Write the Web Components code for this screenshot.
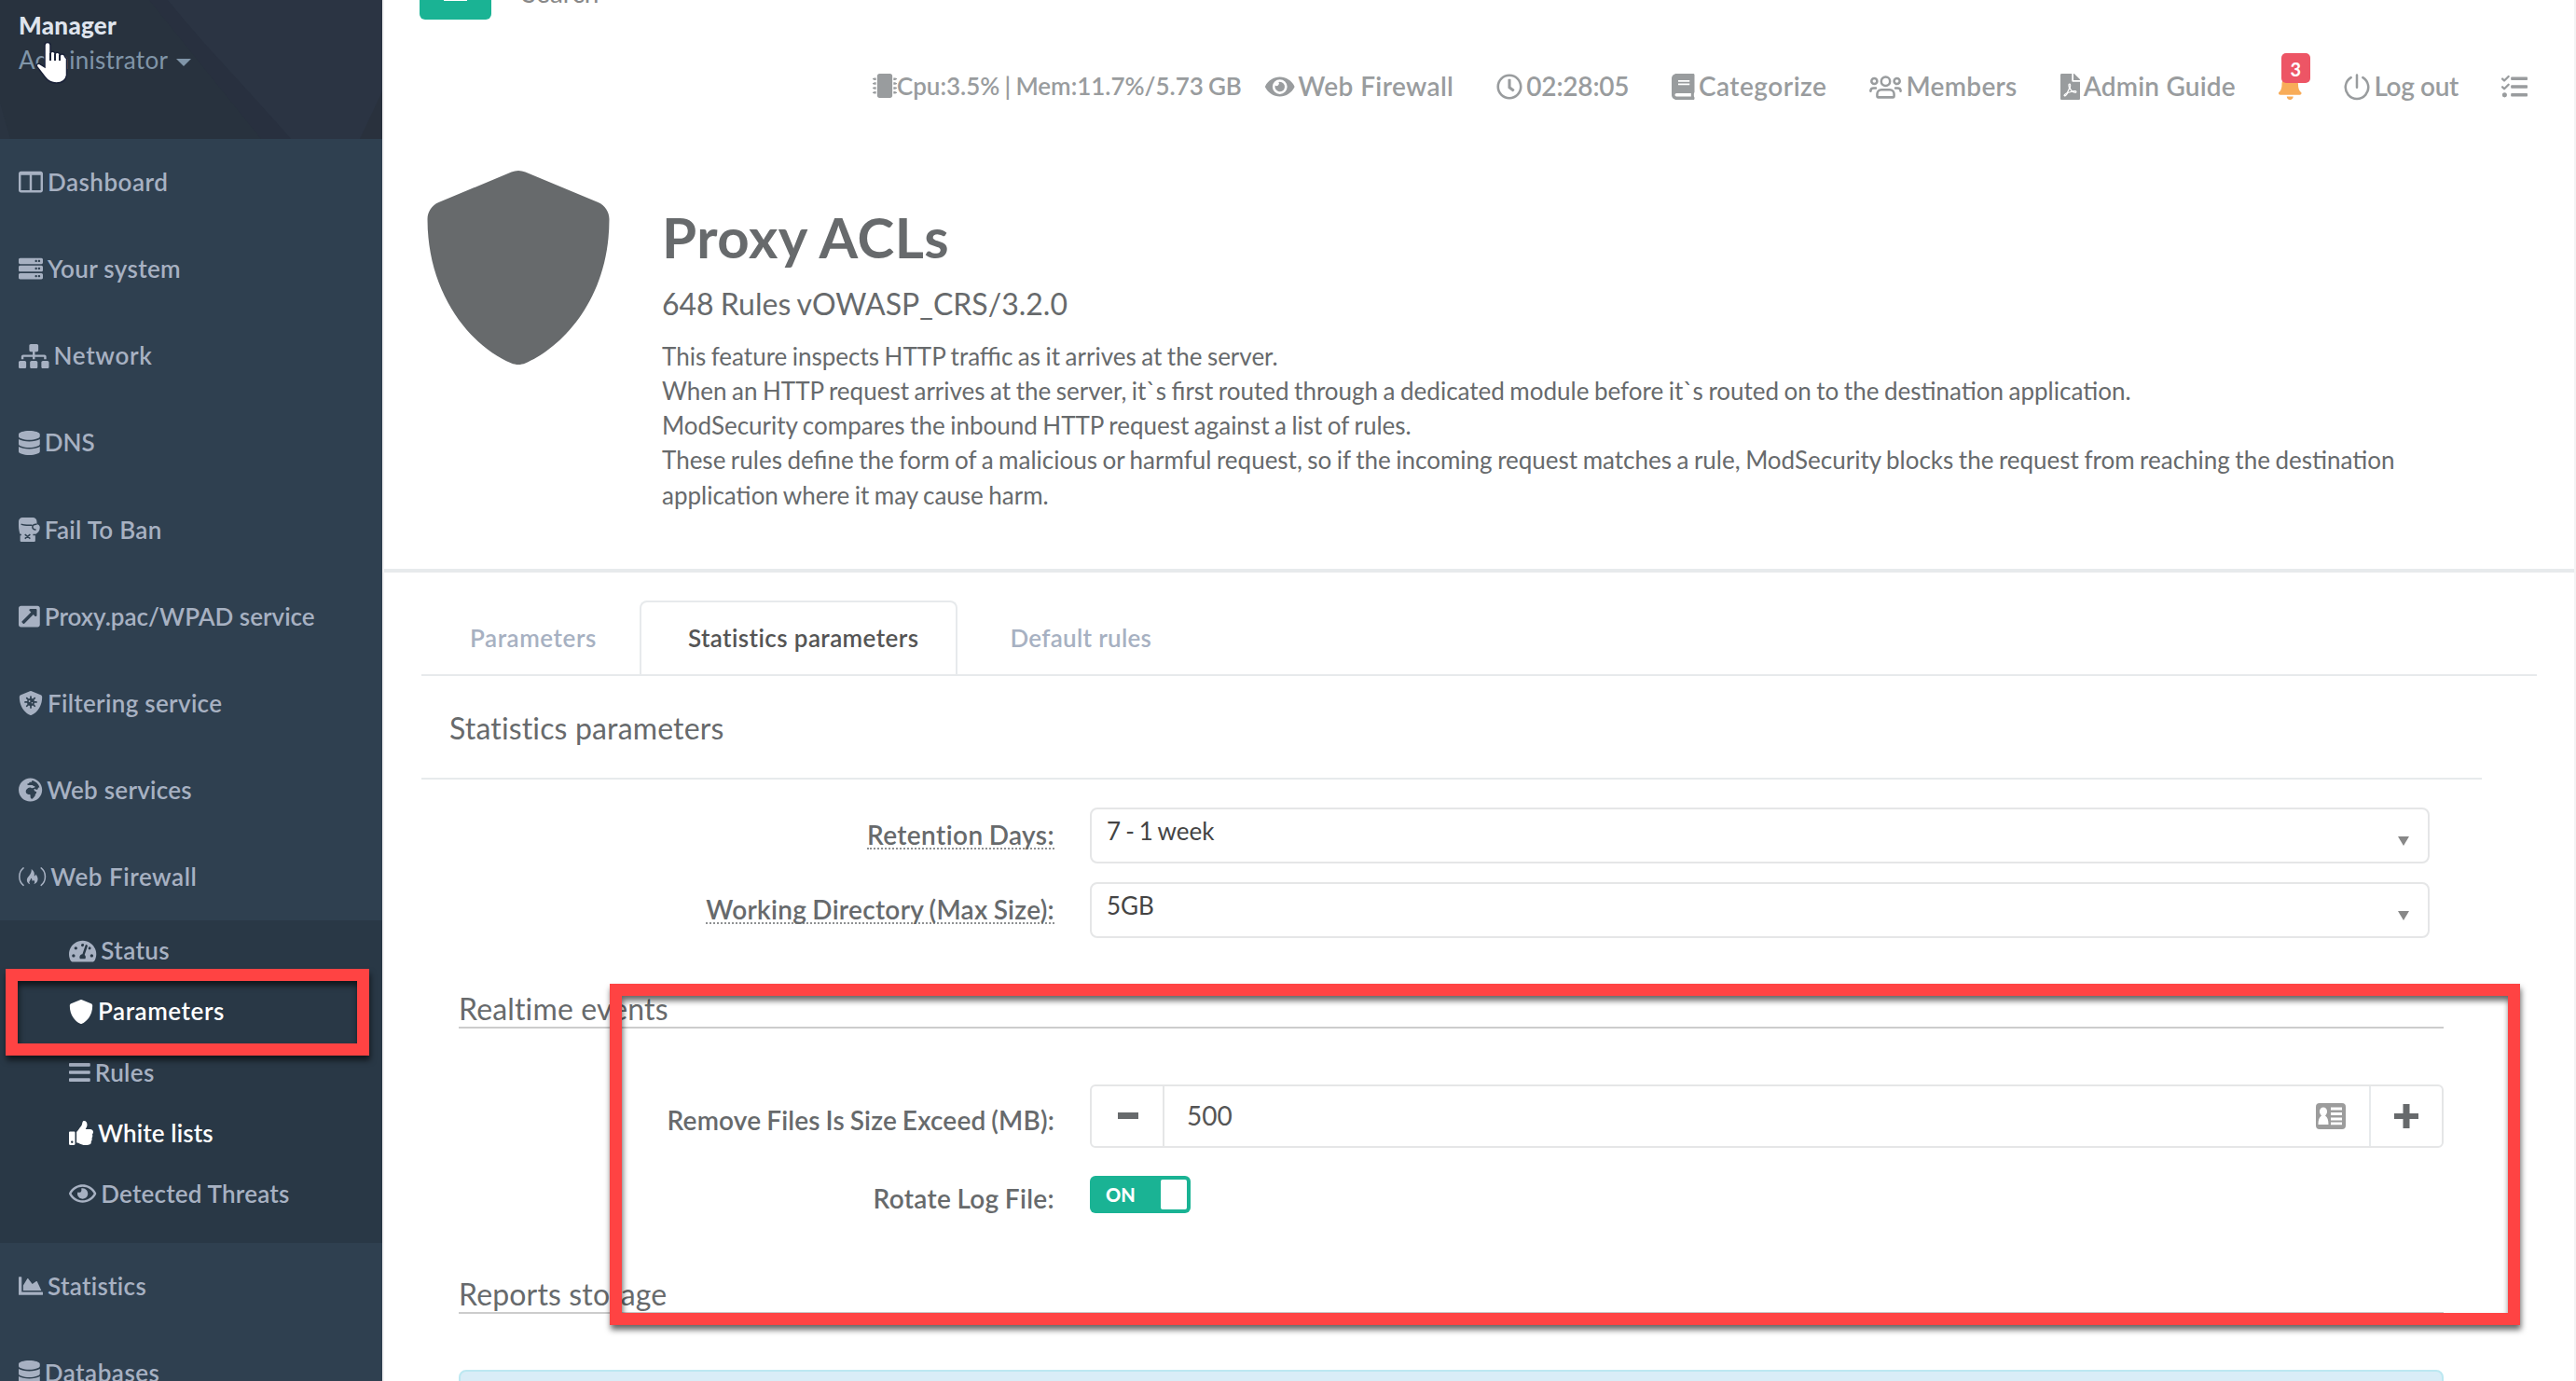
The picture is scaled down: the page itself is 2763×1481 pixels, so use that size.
<!DOCTYPE html>
<html lang="en">
<head>
<meta charset="utf-8">
<title>Proxy ACLs</title>
<style>
    html, body {
        margin: 0;
        height: 100%;
        overflow: hidden;
        background: #f3f3f4;
        font-family: Lato, "Open Sans", sans-serif;
        font-size: 26px;
        line-height: 37.14px;
        color: #676a6c;
    }
</style>
</head>
<body>
<app-shell>
    <side-nav slot="side">
        <user-profile slot="profile" name="Manager" role-name="Administrator"></user-profile>
        <nav-item icon="columns" style="letter-spacing:.5px">Dashboard</nav-item>
        <nav-item icon="server" style="letter-spacing:.35px">Your system</nav-item>
        <nav-item icon="sitemap" style="letter-spacing:.7px">Network</nav-item>
        <nav-item icon="database">DNS</nav-item>
        <nav-item icon="glove" style="letter-spacing:.3px">Fail To Ban</nav-item>
        <nav-item icon="external">Proxy.pac/WPAD service</nav-item>
        <nav-item icon="shield-virus" style="letter-spacing:.3px">Filtering service</nav-item>
        <nav-item icon="globe" style="letter-spacing:.25px">Web services</nav-item>
        <nav-item icon="campfire" style="letter-spacing:.55px">Web Firewall</nav-item>
        <sub-nav>
            <nav-item level="2" icon="gauge" style="letter-spacing:.4px">Status</nav-item>
            <nav-item level="2" icon="shield" style="letter-spacing:.55px" active>Parameters</nav-item>
            <nav-item level="2" icon="bars" style="letter-spacing:.4px">Rules</nav-item>
            <nav-item level="2" icon="thumbs-up" style="letter-spacing:.1px" active>White lists</nav-item>
            <nav-item level="2" icon="eye-open" style="letter-spacing:.2px">Detected Threats</nav-item>
        </sub-nav>
        <nav-item icon="chart-area" style="letter-spacing:.3px">Statistics</nav-item>
        <nav-item icon="database" style="letter-spacing:.5px">Databases</nav-item>
    </side-nav>

    <top-bar>
        <top-link icon="microchip" style="letter-spacing:-.03px" tight>Cpu:3.5% | Mem:11.7%/5.73 GB</top-link>
        <top-link icon="eye" style="letter-spacing:.4px">Web Firewall</top-link>
        <top-link icon="clock" style="letter-spacing:-.2px">02:28:05</top-link>
        <top-link icon="book" style="letter-spacing:.5px">Categorize</top-link>
        <top-link icon="users" style="letter-spacing:.3px">Members</top-link>
        <top-link icon="pdf" style="letter-spacing:.2px">Admin Guide</top-link>
        <top-link icon="bell" badge="3"></top-link>
        <top-link icon="power" style="letter-spacing:-.35px">Log out</top-link>
        <top-link icon="tasks"></top-link>
    </top-bar>

    <page-hero icon="shield">
        <span slot="title">Proxy ACLs</span>
        <span slot="subtitle">648 Rules vOWASP_CRS/3.2.0</span>
        This feature inspects HTTP traffic as it arrives at the server.<br>
        When an HTTP request arrives at the server, it`s first routed through a dedicated module before it`s routed on to the destination application.<br>
        ModSecurity compares the inbound HTTP request against a list of rules.<br>
        These rules define the form of a malicious or harmful request, so if the incoming request matches a rule, ModSecurity blocks the request from reaching the destination<br>
        application where it may cause harm.
    </page-hero>

    <tab-bar>
        <tab-item style="letter-spacing:.55px">Parameters</tab-item>
        <tab-item style="letter-spacing:.4px" active>Statistics parameters</tab-item>
        <tab-item style="letter-spacing:.3px">Default rules</tab-item>
    </tab-bar>

    <settings-panel heading="Statistics parameters">
        <form-row label="Retention Days:" style="--label-spacing:.4px" hint>
            <select-box>7 - 1 week</select-box>
        </form-row>
        <form-row label="Working Directory (Max Size):" style="--label-spacing:.3px" hint>
            <select-box>5GB</select-box>
        </form-row>
        <section-title>Realtime events</section-title>
        <form-row label="Remove Files Is Size Exceed (MB):" offset="18" style="--label-spacing:.17px">
            <number-spinner value="500"></number-spinner>
        </form-row>
        <form-row label="Rotate Log File:" offset="4" style="--label-spacing:.35px">
            <toggle-switch>ON</toggle-switch>
        </form-row>
        <section-title class="last">Reports storage</section-title>
        <info-alert></info-alert>
    </settings-panel>

    <highlight-box slot="overlay" style="left:6px;top:1039px;width:390px;height:93px"></highlight-box>
    <highlight-box slot="overlay" style="left:654px;top:1055px;width:2049px;height:366px"></highlight-box>
    <mouse-pointer slot="overlay" style="left:38px;top:43px"></mouse-pointer>
</app-shell>

<script>
// name: [viewBox width, markup], every icon is 512 units high
const ICONS = {
    columns: [512, '<path d="M464 32H48C21.49 32 0 53.49 0 80v352c0 26.51 21.49 48 48 48h416c26.51 0 48-21.49 48-48V80c0-26.51-21.49-48-48-48zM232 432H54a6 6 0 0 1-6-6V112h184v320zm226 0H280V112h184v314a6 6 0 0 1-6 6z"/>'],
    server: [512, [0, 160, 320].map(y => `<path transform="translate(0 ${y})" d="M480 160H32c-17.673 0-32-14.327-32-32V64c0-17.673 14.327-32 32-32h448c17.673 0 32 14.327 32 32v64c0 17.673-14.327 32-32 32zm-48-88c-13.255 0-24 10.745-24 24s10.745 24 24 24 24-10.745 24-24-10.745-24-24-24zm-64 0c-13.255 0-24 10.745-24 24s10.745 24 24 24 24-10.745 24-24-10.745-24-24-24z"/>`).join('')],
    sitemap: [640, '<path d="M128 352H32c-17.67 0-32 14.33-32 32v96c0 17.67 14.33 32 32 32h96c17.67 0 32-14.33 32-32v-96c0-17.67-14.33-32-32-32zm-24-80h192v48h48v-48h192v48h48v-57.59c0-21.17-17.23-38.41-38.41-38.41H344v-64h40c17.67 0 32-14.33 32-32V32c0-17.67-14.33-32-32-32H256c-17.67 0-32 14.33-32 32v96c0 17.67 14.33 32 32 32h40v64H94.41C73.23 224 56 241.23 56 262.41V320h48v-48zm264 80h-96c-17.67 0-32 14.33-32 32v96c0 17.67 14.33 32 32 32h96c17.67 0 32-14.33 32-32v-96c0-17.67-14.33-32-32-32zm240 0h-96c-17.67 0-32 14.33-32 32v96c0 17.67 14.33 32 32 32h96c17.67 0 32-14.33 32-32v-96c0-17.67-14.33-32-32-32z"/>'],
    database: [448, '<path d="M448 73.143v45.714C448 159.143 347.667 192 224 192S0 159.143 0 118.857V73.143C0 32.857 100.333 0 224 0s224 32.857 224 73.143zM448 176v102.857C448 319.143 347.667 352 224 352S0 319.143 0 278.857V176c48.125 33.143 136.208 48.572 224 48.572S399.874 209.143 448 176zm0 160v102.857C448 479.143 347.667 512 224 512S0 479.143 0 438.857V336c48.125 33.143 136.208 48.572 224 48.572S399.874 369.143 448 336z"/>'],
    glove: [448, '<path d="M80 0h220c46 0 84 38 84 84v60c38 0 64 30 64 68 0 70-42 112-98 150H34C14 300 0 240 0 180V80C0 36 36 0 80 0z"/><path d="M32 352h320v136q0 24-24 24H56q-24 0-24-24z"/><g fill="none" stroke="var(--cut, #2f4050)" stroke-width="30"><path d="M52 140c50 22 130 26 232 22M384 144c-60-6-92 14-92 54 0 44 34 62 74 56M0 366h56M304 366h100M132 358l112 88M244 358l-112 88"/></g>'],
    external: [448, '<path d="M448 80v352c0 26.51-21.49 48-48 48H48c-26.51 0-48-21.49-48-48V80c0-26.51 21.49-48 48-48h352c26.51 0 48 21.49 48 48zm-88 16H248.029c-21.313 0-32.08 25.861-16.971 40.971l31.984 31.987L67.515 364.485c-4.686 4.686-4.686 12.284 0 16.971l31.029 31.029c4.687 4.686 12.285 4.686 16.971 0l195.526-195.526 31.988 31.991C358.058 264.058 384 253.425 384 231.979V120c0-13.255-10.745-24-24-24z"/>'],
    shield: [512, '<path d="M466.5 83.7l-192-80a48.15 48.15 0 0 0-36.9 0l-192 80C27.7 91.1 16 108.6 16 128c0 198.5 114.5 335.7 221.5 380.3 11.8 4.9 25.1 4.9 36.9 0C360.1 472.6 496 349.3 496 128c0-19.4-11.7-36.9-29.5-44.3z"/>'],
    'shield-virus': [512, '<path d="M466.5 83.7l-192-80a48.15 48.15 0 0 0-36.9 0l-192 80C27.7 91.1 16 108.6 16 128c0 198.5 114.5 335.7 221.5 380.3 11.8 4.9 25.1 4.9 36.9 0C360.1 472.6 496 349.3 496 128c0-19.4-11.7-36.9-29.5-44.3z"/><g stroke="var(--cut, #2f4050)" stroke-width="34" stroke-linecap="round"><path d="M256 118v236M138 236h236M172 152l168 168M340 152L172 320"/></g><circle cx="256" cy="236" r="78" fill="var(--cut, #2f4050)"/><circle cx="228" cy="216" r="18"/><circle cx="284" cy="252" r="16"/>'],
    globe: [496, '<path d="M248 8C111.03 8 0 119.03 0 256s111.03 248 248 248 248-111.03 248-248S384.97 8 248 8zm160 215.5v6.93c0 5.87-3.32 11.24-8.57 13.86l-15.39 7.7a15.485 15.485 0 0 1-15.53-.97l-18.21-12.14a15.52 15.52 0 0 0-13.5-1.81l-2.65.88c-9.7 3.23-13.66 14.79-7.99 23.3l13.24 19.86c2.87 4.31 7.71 6.9 12.89 6.9h8.21c8.56 0 15.5 6.94 15.5 15.5v11.34c0 3.35-1.09 6.62-3.1 9.3l-18.74 24.98c-1.42 1.9-2.39 4.1-2.83 6.43l-4.3 22.83c-.62 3.29-2.29 6.29-4.76 8.56a159.608 159.608 0 0 0-25 29.16l-13.03 19.55a27.756 27.756 0 0 1-23.09 12.36c-10.51 0-20.12-5.94-24.82-15.34a78.902 78.902 0 0 1-8.33-35.29V367.5c0-8.56-6.94-15.5-15.5-15.5h-25.88c-14.49 0-28.38-5.76-38.63-16a54.659 54.659 0 0 1-16-38.63v-14.06c0-17.19 8.1-33.38 21.85-43.7l27.58-20.69a54.663 54.663 0 0 1 32.78-10.93h.89c8.48 0 16.85 1.97 24.43 5.77l14.72 7.36c3.68 1.84 7.93 2.14 11.83.84l47.31-15.77c6.33-2.11 10.6-8.03 10.6-14.7 0-8.56-6.94-15.5-15.5-15.5h-10.09c-4.11 0-8.05-1.63-10.96-4.54l-6.92-6.92a15.493 15.493 0 0 0-10.96-4.54H199.5c-8.56 0-15.5-6.94-15.5-15.5v-4.4c0-7.11 4.84-13.31 11.74-15.04l14.45-3.61c3.74-.94 7-3.23 9.14-6.44l8.08-12.11c2.87-4.31 7.71-6.9 12.89-6.9h24.21c8.56 0 15.5-6.94 15.5-15.5v-21.7C359.23 71.63 422.86 131.02 441.93 208H423.5c-8.56 0-15.5 6.94-15.5 15.5z"/>'],
    campfire: [576, '<g fill="none" stroke="currentColor" stroke-width="30" stroke-linecap="round"><path d="M100 76C-12 160-12 352 100 440M476 76c112 84 112 276 0 364"/></g><path d="M270 96c70 50 66 110 60 150 22-4 30-22 30-40 40 50 52 90 42 130-10 44-44 74-80 80 26-30 20-62-6-84-8 16-20 20-30 16 0-30-6-44-26-60-4 40-34 56-36 88 0 20 10 34 20 42-44-8-72-50-70-94 4-72 108-110 96-228z"/>'],
    gauge: [576, '<path d="M288 32C128.94 32 0 160.94 0 320c0 52.8 14.25 102.26 39.06 144.8 5.61 9.62 16.3 15.2 27.44 15.2h443c11.14 0 21.83-5.58 27.44-15.2C561.75 422.26 576 372.8 576 320c0-159.06-128.94-288-288-288zm0 64c14.71 0 26.58 10.13 30.32 23.65-1.11 2.26-2.64 4.23-3.45 6.67l-9.22 27.67c-5.13 3.49-10.97 6.01-17.64 6.01-17.67 0-32-14.33-32-32S270.33 96 288 96zM96 384c-17.67 0-32-14.33-32-32s14.33-32 32-32 32 14.33 32 32-14.33 32-32 32zm48-160c-17.67 0-32-14.33-32-32s14.33-32 32-32 32 14.33 32 32-14.33 32-32 32zm246.77-72.41l-61.33 184C343.13 347.33 352 364.54 352 384c0 11.72-3.38 22.55-8.88 32H232.88c-5.5-9.45-8.88-20.28-8.88-32 0-33.94 26.5-61.43 59.9-63.59l61.34-184.01c4.17-12.56 17.73-19.45 30.36-15.17 12.57 4.19 19.35 17.79 15.17 30.36zm14.66 57.2l15.52-46.55c3.47-1.29 7.13-2.23 11.05-2.23 17.67 0 32 14.33 32 32s-14.33 32-32 32c-11.38-.01-20.89-6.28-26.57-15.22zM480 384c-17.67 0-32-14.33-32-32s14.33-32 32-32 32 14.33 32 32-14.33 32-32 32z"/>'],
    bars: [448, '<path d="M16 132h416c8.837 0 16-7.163 16-16V76c0-8.837-7.163-16-16-16H16C7.163 60 0 67.163 0 76v40c0 8.837 7.163 16 16 16zm0 160h416c8.837 0 16-7.163 16-16v-40c0-8.837-7.163-16-16-16H16c-8.837 0-16 7.163-16 16v40c0 8.837 7.163 16 16 16zm0 160h416c8.837 0 16-7.163 16-16v-40c0-8.837-7.163-16-16-16H16c-8.837 0-16 7.163-16 16v40c0 8.837 7.163 16 16 16z"/>'],
    'thumbs-up': [512, '<path d="M104 224H24c-13.255 0-24 10.745-24 24v240c0 13.255 10.745 24 24 24h80c13.255 0 24-10.745 24-24V248c0-13.255-10.745-24-24-24zM64 472c-13.255 0-24-10.745-24-24s10.745-24 24-24 24 10.745 24 24-10.745 24-24 24zM384 81.452c0 42.416-25.97 66.208-33.277 94.548h101.723c33.397 0 59.397 27.746 59.553 58.098.084 17.938-7.546 37.249-19.439 49.197l-.11.11c9.836 23.337 8.237 56.037-9.308 79.469 8.681 25.895-.069 57.704-16.382 74.757 4.298 17.598 2.244 32.575-6.148 44.632C440.202 511.587 389.616 512 346.839 512l-2.845-.001c-48.287-.017-87.806-17.598-119.56-31.725-15.957-7.099-36.821-15.887-52.651-16.178-6.54-.12-11.783-5.457-11.783-11.998v-213.77c0-3.2 1.282-6.271 3.558-8.521 39.614-39.144 56.648-80.587 89.117-113.111 14.804-14.832 20.188-37.236 25.393-58.902C282.515 39.293 291.817 0 312 0c24 0 72 8 72 81.452z"/>'],
    'eye-open': [576, '<path d="M288 144a110.94 110.94 0 0 0-31.24 5 55.4 55.4 0 0 1 7.24 27 56 56 0 0 1-56 56 55.4 55.4 0 0 1-27-7.24A111.71 111.71 0 1 0 288 144zm284.52 97.4C518.29 135.59 410.93 64 288 64S57.68 135.64 3.48 241.41a32.35 32.35 0 0 0 0 29.19C57.71 376.41 165.07 448 288 448s230.32-71.64 284.52-177.41a32.35 32.35 0 0 0 0-29.19zM288 400c-98.65 0-189.09-55-237.93-144C98.91 167 189.34 112 288 112s189.09 55 237.93 144C477.1 345 386.66 400 288 400z"/>'],
    eye: [576, '<path d="M572.52 241.4C518.29 135.59 410.93 64 288 64S57.68 135.64 3.48 241.41a32.35 32.35 0 0 0 0 29.19C57.71 376.41 165.07 448 288 448s230.32-71.64 284.52-177.41a32.35 32.35 0 0 0 0-29.19zM288 400a144 144 0 1 1 144-144 143.93 143.93 0 0 1-144 144zm0-240a95.31 95.31 0 0 0-25.31 3.79 47.85 47.85 0 0 1-66.9 66.9A95.78 95.78 0 1 0 288 160z"/>'],
    'chart-area': [512, '<path d="M500 384c6.6 0 12 5.4 12 12v40c0 6.6-5.4 12-12 12H12c-6.6 0-12-5.4-12-12V76c0-6.6 5.4-12 12-12h40c6.6 0 12 5.4 12 12v308h436zM372.7 159.5L288 216l-85.3-113.7c-5.1-6.8-15.5-6.3-19.9 1L96 248v104h384l-89.9-187.8c-3.2-6.5-11.4-8.7-17.4-4.7z"/>'],
    clock: [512, '<path d="M256 8C119 8 8 119 8 256s111 248 248 248 248-111 248-248S393 8 256 8zm0 448c-110.5 0-200-89.5-200-200S145.5 56 256 56s200 89.5 200 200-89.5 200-200 200zm61.8-104.4l-84.9-61.7c-3.1-2.3-4.9-5.9-4.9-9.7V116c0-6.6 5.4-12 12-12h32c6.6 0 12 5.4 12 12v141.7l66.8 48.6c5.4 3.9 6.5 11.4 2.6 16.8L334.6 349c-3.9 5.3-11.4 6.5-16.8 2.6z"/>'],
    book: [448, '<path d="M448 360V24c0-13.3-10.7-24-24-24H96C43 0 0 43 0 96v320c0 53 43 96 96 96h328c13.3 0 24-10.7 24-24v-16c0-7.5-3.5-14.3-8.9-18.7-4.2-15.4-4.2-59.3 0-74.7 5.4-4.3 8.9-11.1 8.9-18.6zM128 134c0-3.3 2.7-6 6-6h212c3.3 0 6 2.7 6 6v20c0 3.3-2.7 6-6 6H134c-3.3 0-6-2.7-6-6v-20zm0 64c0-3.3 2.7-6 6-6h212c3.3 0 6 2.7 6 6v20c0 3.3-2.7 6-6 6H134c-3.3 0-6-2.7-6-6v-20zm253.4 250H96c-17.7 0-32-14.3-32-32 0-17.6 14.4-32 32-32h285.4c-1.9 17.1-1.9 46.9 0 64z"/>'],
    users: [640, '<g fill="none" stroke="currentColor" stroke-width="46" stroke-linecap="round"><circle cx="320" cy="150" r="86"/><circle cx="98" cy="146" r="56"/><circle cx="542" cy="146" r="56"/><path d="M238 314h164c48 0 84 40 84 90v36q0 24-24 24H178q-24 0-24-24v-36c0-50 36-90 84-90zM24 344c2-38 24-60 60-60h44M616 344c-2-38-24-60-60-60h-44"/></g>'],
    pdf: [384, '<path d="M181.9 256.1c-5-16-4.9-46.9-2-46.9 8.4 0 7.6 36.9 2 46.9zm-1.7 47.2c-7.7 20.2-17.3 43.3-28.4 62.7 18.3-7 39-17.2 62.9-21.9-12.7-9.6-24.9-23.4-34.5-40.8zM86.1 428.1c0 .8 13.2-5.4 34.9-40.2-6.7 6.3-29.1 24.5-34.9 40.2zM248 160h136v328c0 13.3-10.7 24-24 24H24c-13.3 0-24-10.7-24-24V24C0 10.7 10.7 0 24 0h200v136c0 13.2 10.8 24 24 24zm-8 171.8c-20-12.2-33.3-29-42.7-53.8 4.5-18.5 11.6-46.6 6.2-64.2-4.7-29.4-42.4-26.5-47.8-6.8-5 18.3-.4 44.1 8.1 77-11.6 27.6-28.7 64.6-40.8 85.8-.1 0-.1.1-.2.1-27.1 13.9-73.6 44.5-54.5 68 5.6 6.9 16 10 21.5 10 17.9 0 35.7-18 61.1-61.8 25.8-8.5 54.1-19.1 79-23.2 21.7 11.8 47.1 19.5 64 19.5 29.2 0 31.2-32 19.7-43.4-13.9-13.6-54.3-9.7-73.6-7.2zM377 105L279 7c-4.5-4.5-10.6-7-17-7h-6v128h128v-6.1c0-6.3-2.5-12.4-7-16.9zm-74.1 255.3c4.1-2.7-2.5-11.9-42.8-9 37.1 15.8 42.8 9 42.8 9z"/>'],
    bell: [448, '<path d="M224 512c35.32 0 63.97-28.65 63.97-64H160.03c0 35.35 28.65 64 63.97 64zm215.39-149.71c-19.32-20.76-55.47-51.99-55.47-154.29 0-77.7-54.48-139.9-127.94-155.16V32c0-17.67-14.32-32-31.98-32s-31.98 14.33-31.98 32v20.84C118.56 68.1 64.08 130.3 64.08 208c0 102.3-36.15 133.53-55.47 154.29-6 6.45-8.66 14.16-8.61 21.71.11 16.4 12.98 32 32.1 32h383.8c19.12 0 32-15.6 32.1-32 .05-7.55-2.61-15.27-8.61-21.71z"/>'],
    power: [512, '<g fill="none" stroke="currentColor" stroke-width="46" stroke-linecap="round"><path d="M140 76a224 224 0 1 0 232 0M256 26v242"/></g>'],
    tasks: [512, '<rect x="186" y="66" width="326" height="64" rx="14"/><rect x="186" y="226" width="326" height="64" rx="14"/><rect x="186" y="386" width="326" height="64" rx="14"/><circle cx="62" cy="418" r="46"/><g fill="none" stroke="currentColor" stroke-width="42" stroke-linecap="round" stroke-linejoin="round"><path d="M20 102l36 36 84-84M20 262l36 36 84-84"/></g>'],
    microchip: [512, '<path d="M416 48v416c0 26.51-21.49 48-48 48H144c-26.51 0-48-21.49-48-48V48c0-26.51 21.49-48 48-48h224c26.51 0 48 21.49 48 48z"/>' + [88, 184, 280, 376].map(y => `<path d="M440 ${y}h42a6 6 0 0 1 6 6v6h24v24h-24v6a6 6 0 0 1-6 6h-42zM72 ${y}H30a6 6 0 0 0-6 6v6H0v24h24v6a6 6 0 0 0 6 6h42z"/>`).join('')]
};

// Attaches an open shadow root with the given styles and markup
function shadow(el, css, html) {
    el.attachShadow({ mode: 'open' }).innerHTML = `<style>${css}</style>${html}`;
}

customElements.define('fa-icon', class extends HTMLElement {
    connectedCallback() {
        const [w, body] = ICONS[this.getAttribute('name')];
        shadow(this, `
            :host { display: inline-block; height: 1em; width: ${w / 512}em; vertical-align: -.125em; }
            svg { display: block; width: 100%; height: 100%; fill: currentColor; overflow: visible; }
        `, `<svg viewBox="0 0 ${w} 512">${body}</svg>`);
    }
});

customElements.define('app-shell', class extends HTMLElement {
    connectedCallback() {
        shadow(this, `
            :host { display: grid; grid-template-columns: 410px 1fr; height: 1481px; overflow: hidden; position: relative; }
            main { background: #fff; margin: 0 2px; overflow: hidden; min-width: 0; }
        `, `<slot name="side"></slot><main><slot></slot></main><slot name="overlay"></slot>`);
    }
});

customElements.define('side-nav', class extends HTMLElement {
    connectedCallback() {
        shadow(this, `
            :host { display: block; background: #2f4050; overflow: hidden; font-weight: 600; color: #a7b1c2; }
        `, `<slot name="profile"></slot><slot></slot>`);
    }
});

customElements.define('user-profile', class extends HTMLElement {
    connectedCallback() {
        shadow(this, `
            :host { display: grid; height: 149px; overflow: hidden; }
            svg, div { grid-area: 1 / 1; }
            div { padding: 9px 20px; letter-spacing: .3px; }
            b { display: block; color: #dfe4ed; }
            span { font-weight: 400; color: #8095a8; }
            i { display: inline-block; margin-left: 9px; vertical-align: 3px; border: 8px solid transparent; border-top-color: #8095a8; border-bottom: 0; }
        `, `<svg width="410" height="149">
                <rect width="410" height="149" fill="#28323e"/>
                <path d="M160 0h250v149H280z" fill="#28303f"/>
                <path d="M180 0h230v149H312C270 100 220 50 180 0z" fill="#2b3443"/>
                <path d="M410 98v51h-24z" fill="#29313d"/>
                <path d="M0 110l11 39H0z" fill="#2a3441"/>
            </svg>
            <div><b>${this.getAttribute('name')}</b><span>${this.getAttribute('role-name')}</span><i></i></div>`);
    }
});

customElements.define('nav-item', class extends HTMLElement {
    connectedCallback() {
        shadow(this, `
            :host { display: block; padding: 28px 20px; white-space: nowrap; }
            :host([level="2"]) { padding: 14px 20px 14px 74px; }
            :host([active]) { color: #fff; }
            fa-icon { margin-right: 5px; }
        `, `<fa-icon name="${this.getAttribute('icon')}"></fa-icon><slot></slot>`);
    }
});

customElements.define('sub-nav', class extends HTMLElement {
    connectedCallback() {
        shadow(this, `
            :host { display: block; background: #293846; padding-bottom: 20px; }
        `, `<slot></slot>`);
    }
});

customElements.define('top-bar', class extends HTMLElement {
    connectedCallback() {
        shadow(this, `
            :host { display: block; height: 153px; }
            .search { display: flex; align-items: flex-end; gap: 33px; height: 21px; margin-left: 38px; overflow: hidden; font-size: 28px; color: #888; }
            .burger { display: flex; align-items: center; justify-content: center; width: 77px; height: 65px; flex: none; background: #1ab394; border-radius: 6px; }
            .burger i { width: 25px; height: 24px; box-sizing: border-box; border: solid #fff; border-width: 4px 0; }
            .search span { line-height: 40px; margin-bottom: 9px; }
            nav { display: flex; justify-content: flex-end; gap: 46px; margin-top: 51px; padding-right: 50px; font-size: 28px; line-height: 40px; font-weight: 600; color: #999c9e; }
        `, `<div class="search"><div class="burger"><i></i></div><span>Search</span></div>
            <nav><slot></slot></nav>`);
    }
});

customElements.define('top-link', class extends HTMLElement {
    connectedCallback() {
        const badge = this.getAttribute('badge');
        shadow(this, `
            :host { display: block; position: relative; white-space: nowrap; }
            fa-icon { margin-right: ${this.textContent ? 4 : 0}px; }
            :host([tight]) { font-size: 26px; margin-right: -21px; word-spacing: -1.2px; }
            :host([tight]) fa-icon { margin-right: 0; }
            :host([badge]) fa-icon { color: #f8ac59; }
            em { position: absolute; left: 3px; top: -15px; width: 31px; height: 32px; border-radius: 5px; background: #ed5565; color: #fff; font: 700 20px/34px Lato, sans-serif; text-align: center; }
        `, `<fa-icon name="${this.getAttribute('icon')}"></fa-icon><slot></slot>${badge ? `<em>${badge}</em>` : ''}`);
    }
});

customElements.define('page-hero', class extends HTMLElement {
    connectedCallback() {
        shadow(this, `
            :host { display: flex; box-sizing: border-box; height: 461px; padding: 30px 0 0 40px; border-bottom: 4px solid #e7eaec; }
            fa-icon { font-size: 208px; flex: none; }
            .text { margin-left: 50px; padding-top: 38px; white-space: nowrap; word-spacing: -1.15px; }
            h1 { margin: 0 0 20px; font-size: 60px; line-height: 66px; font-weight: 700; word-spacing: 0; letter-spacing: .55px; }
            h3 { margin: 0 0 20px; font-size: 32px; line-height: 37px; font-weight: 400; }
            p { margin: 0; }
        `, `<fa-icon name="${this.getAttribute('icon')}"></fa-icon>
            <div class="text">
                <h1><slot name="title"></slot></h1>
                <h3><slot name="subtitle"></slot></h3>
                <p><slot></slot></p>
            </div>`);
    }
});

customElements.define('tab-bar', class extends HTMLElement {
    connectedCallback() {
        shadow(this, `
            :host { display: flex; gap: 4px; margin: 30px 40px 0; height: 79px; border-bottom: 2px solid #e7eaec; }
        `, `<slot></slot>`);
    }
});

customElements.define('tab-item', class extends HTMLElement {
    connectedCallback() {
        shadow(this, `
            :host { display: block; padding: 20px 40px 20px 50px; border: 2px solid transparent; border-bottom: 0; border-radius: 8px 8px 0 0; font-weight: 600; color: #a7b1c2; white-space: nowrap; }
            :host([active]) { color: #555; background: #fff; border-color: #e7eaec; padding-bottom: 22px; }
        `, `<slot></slot>`);
    }
});

customElements.define('settings-panel', class extends HTMLElement {
    connectedCallback() {
        shadow(this, `
            :host { display: block; padding: 36px 0 0 40px; }
            h2 { margin: 0 0 30px; width: 2180px; padding: 0 0 33px 30px; border-bottom: 2px solid #e7eaec; font-size: 32px; line-height: 40px; font-weight: 400; letter-spacing: .15px; }
        `, `<h2>${this.getAttribute('heading')}</h2><slot></slot>`);
    }
});

customElements.define('form-row', class extends HTMLElement {
    connectedCallback() {
        shadow(this, `
            :host { display: grid; grid-template-columns: 679px max-content; column-gap: 38px; align-items: start; margin-bottom: 20px; }
            label { justify-self: end; margin-top: ${this.getAttribute('offset') || 9}px; height: 36px; font-size: 28px; line-height: 40px; font-weight: 600; white-space: nowrap; word-spacing: -1.2px; letter-spacing: var(--label-spacing, 0); }
            :host([hint]) label { height: 34px; border-bottom: 2px dotted #8f9193; }
            :host(:not([hint])) { margin-bottom: 30px; }
        `, `<label>${this.getAttribute('label')}</label><slot></slot>`);
    }
});

customElements.define('select-box', class extends HTMLElement {
    connectedCallback() {
        shadow(this, `
            :host { display: flex; box-sizing: border-box; justify-content: space-between; width: 1437px; height: 60px; padding: 5px 20px 0 16px; border: 2px solid #e5e6e7; border-radius: 8px; color: #444; word-spacing: -1.6px; }
            i { margin-top: 24px; height: 0; border: 6px solid transparent; border-top: 10px solid #888; border-bottom: 0; }
        `, `<span><slot></slot></span><i></i>`);
    }
});

customElements.define('section-title', class extends HTMLElement {
    connectedCallback() {
        shadow(this, `
            :host { display: block; margin: 56px 0 60px 40px; width: 2129px; height: 39px; border-bottom: 2px solid #ccc; font-size: 32px; line-height: 40px; letter-spacing: .15px; }
            :host(.last) { margin-top: 67px; }
        `, `<slot></slot>`);
    }
});

customElements.define('number-spinner', class extends HTMLElement {
    connectedCallback() {
        shadow(this, `
            :host { display: flex; box-sizing: border-box; width: 1452px; height: 68px; border: 2px solid #e5e6e7; border-radius: 6px; }
            button { display: flex; box-sizing: border-box; align-items: center; justify-content: center; padding: 0; flex: none; border: 0; background: none; color: #676a6c; }
            .minus { border-right: 2px solid #e5e6e7; width: 78px; padding-left: 2px; }
            .plus { border-left: 2px solid #e7eaec; width: 78px; }
            div { flex: 1; display: flex; align-items: center; justify-content: space-between; padding: 0 25px 0 24px; font-size: 28px; color: #555; }
            svg { fill: currentColor; }
            .card { fill: #9c9c9c; }
        `, `<button class="minus"><svg width="22" height="8"><rect y="0" width="22" height="7"/></svg></button>
            <div><span>${this.getAttribute('value')}</span>
                <svg class="card" width="32" height="28" viewBox="0 0 32 28">
                    <path fill-rule="evenodd" d="M4 0h24a4 4 0 0 1 4 4v20a4 4 0 0 1-4 4H4a4 4 0 0 1-4-4V4a4 4 0 0 1 4-4zM8 4.5a4 4.3 0 0 0-4 4.5c0 2 1 3.5 2 4.4C3.5 15 2.5 18 2.5 23h11c0-5-1-8-3.500-9.600 1-.9 2-2.400 2-4.400A4 4.300 0 0 0 8 4.500zM16 4.500V7.500H28V4.500zM16 10V13H28V10zM16 15.500V18.500H28V15.500zM16 20.500V23.200H28V20.500z"/>
                </svg>
            </div>
            <button class="plus"><svg width="26" height="26"><path d="M9.500 0h7v10H26v6h-9.500v10h-7V16H0v-6h9.500z"/></svg></button>`);
    }
});

customElements.define('toggle-switch', class extends HTMLElement {
    connectedCallback() {
        shadow(this, `
            :host { display: flex; box-sizing: border-box; align-items: center; justify-content: space-between; width: 108px; height: 40px; padding: 0 4px 0 17px; border-radius: 6px; background: #1ab394; color: #fff; font-size: 20px; font-weight: 900; line-height: 38px; }
            i { width: 28px; height: 32px; background: #fff; border-radius: 2px; }
        `, `<slot></slot><i></i>`);
    }
});

customElements.define('info-alert', class extends HTMLElement {
    connectedCallback() {
        shadow(this, `
            :host { display: block; box-sizing: border-box; width: 2129px; height: 120px; margin-left: 40px; border: 2px solid #bce8f1; border-radius: 8px; background: #d9edf7; }
        `, `<slot></slot>`);
    }
});

// Red marker frame drawn over the page
customElements.define('highlight-box', class extends HTMLElement {
    connectedCallback() {
        shadow(this, `
            :host { position: absolute; box-sizing: border-box; border: 13px solid #ff4343; filter: drop-shadow(1px 5px 3px rgba(0, 0, 0, .6)); }
        `, '');
    }
});

customElements.define('mouse-pointer', class extends HTMLElement {
    connectedCallback() {
        shadow(this, `
            :host { position: absolute; }
            svg { display: block; }
        `, `<svg width="36" height="48" viewBox="0 0 36 48">
                <path d="M10 5.500a3 3 0 0 1 6 0V15a2.500 2.500 0 0 1 5-.5V16a2.500 2.500 0 0 1 5-.5V18a2.600 2.600 0 0 1 5.500-.5L33.500 20v18c-1 5-5 8-11 8-5 0-9-2-12-6L2 29c-1.500-2-.5-4 2-3.800L10 29z" fill="#fff" stroke="#1a2238" stroke-width="1.500"/>
                <path d="M16 14v8M21 15v7M26 16v6" stroke="#1a2238" stroke-width="2"/>
            </svg>`);
    }
});
</script>
</body>
</html>
